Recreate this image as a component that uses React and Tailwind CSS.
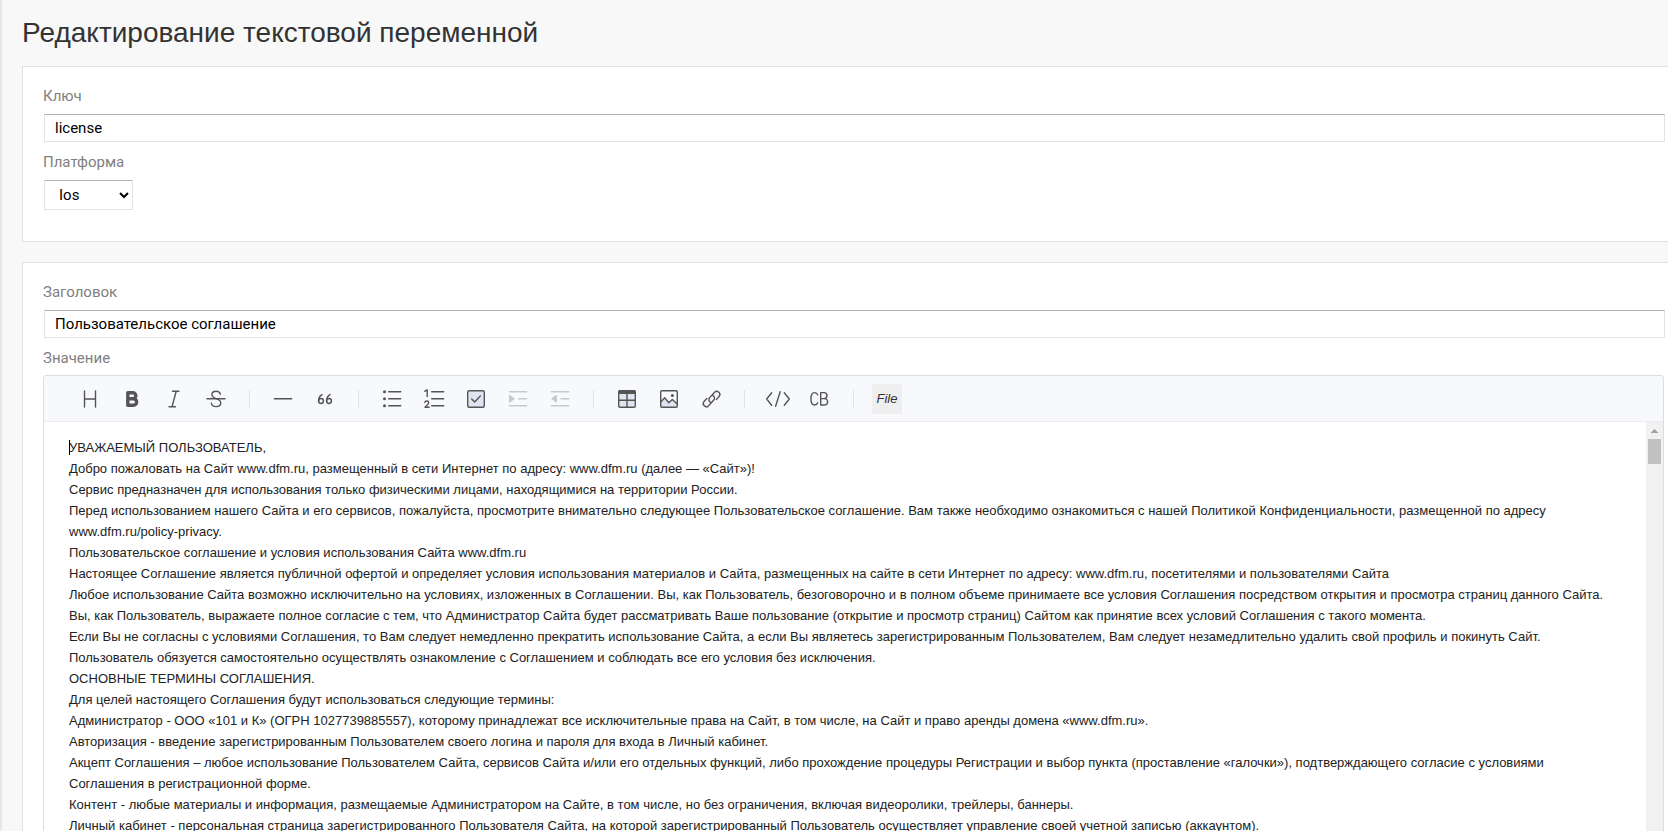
import React, { useState } from 'react';

const AGREEMENT = [
    "УВАЖАЕМЫЙ ПОЛЬЗОВАТЕЛЬ,",
    "Добро пожаловать на Сайт www.dfm.ru, размещенный в сети Интернет по адресу: www.dfm.ru (далее — «Сайт»)!",
    "Сервис предназначен для использования только физическими лицами, находящимися на территории России.",
    "Перед использованием нашего Сайта и его сервисов, пожалуйста, просмотрите внимательно следующее Пользовательское соглашение. Вам также необходимо ознакомиться с нашей Политикой Конфиденциальности, размещенной по адресу www.dfm.ru/policy-privacy.",
    "Пользовательское соглашение и условия использования Сайта www.dfm.ru",
    "Настоящее Соглашение является публичной офертой и определяет условия использования материалов и Сайта, размещенных на сайте в сети Интернет по адресу: www.dfm.ru, посетителями и пользователями Сайта",
    "Любое использование Сайта возможно исключительно на условиях, изложенных в Соглашении. Вы, как Пользователь, безоговорочно и в полном объеме принимаете все условия Соглашения посредством открытия и просмотра страниц данного Сайта.",
    "Вы, как Пользователь, выражаете полное согласие с тем, что Администратор Сайта будет рассматривать Ваше пользование (открытие и просмотр страниц) Сайтом как принятие всех условий Соглашения с такого момента.",
    "Если Вы не согласны с условиями Соглашения, то Вам следует немедленно прекратить использование Сайта, а если Вы являетесь зарегистрированным Пользователем, Вам следует незамедлительно удалить свой профиль и покинуть Сайт.",
    "Пользователь обязуется самостоятельно осуществлять ознакомление с Соглашением и соблюдать все его условия без исключения.",
    "ОСНОВНЫЕ ТЕРМИНЫ СОГЛАШЕНИЯ.",
    "Для целей настоящего Соглашения будут использоваться следующие термины:",
    "Администратор - ООО «101 и К» (ОГРН 1027739885557), которому принадлежат все исключительные права на Сайт, в том числе, на Сайт и право аренды домена «www.dfm.ru».",
    "Авторизация - введение зарегистрированным Пользователем своего логина и пароля для входа в Личный кабинет.",
    "Акцепт Соглашения – любое использование Пользователем Сайта, сервисов Сайта и/или его отдельных функций, либо прохождение процедуры Регистрации и выбор пункта (проставление «галочки»), подтверждающего согласие с условиями Соглашения в регистрационной форме.",
    "Контент - любые материалы и информация, размещаемые Администратором на Сайте, в том числе, но без ограничения, включая видеоролики, трейлеры, баннеры.",
    "Личный кабинет - персональная страница зарегистрированного Пользователя Сайта, на которой зарегистрированный Пользователь осуществляет управление своей учетной записью (аккаунтом).",
];

// Toolbar icons, all drawn on a 32x32 grid
const ICONS = {
    heading: <path d="M10.5 8v16M21.5 8v16M10.5 16h11" />,
    bold: <path strokeWidth="3.4" d="M11.8 9.7h5a3 3 0 0 1 0 6.1h-5zM11.8 15.8h5.6a3.2 3.2 0 0 1 0 6.5h-5.6z" />,
    italic: <path d="M14.5 8.3h6.5M11 23.7h6.5M18.2 8.3l-4.2 15.4" />,
    strike: (
        <>
            <path d="M20.3 11.2c-.4-1.9-2-3-4.2-3-2.4 0-4.2 1.3-4.2 3.4 0 2.2 1.7 3.2 4.3 4.1 2.9.9 4.5 1.9 4.5 4.2s-2 3.7-4.6 3.7c-2.7 0-4.4-1.3-4.8-3.5" />
            <path d="M7 15.7h18" />
        </>
    ),
    hr: <path d="M7.3 15.7h17.4" />,
    quote: (
        <g strokeWidth="1.5">
            <circle cx="12" cy="18" r="2.4" />
            <circle cx="20" cy="18" r="2.4" />
            <path d="M13 11.6c-2.3 1.3-3.4 3.7-3.4 6.4M21 11.6c-2.3 1.3-3.4 3.7-3.4 6.4" />
        </g>
    ),
    ul: (
        <>
            <path d="M12.7 8.7h12M12.7 15.7h12M12.7 22.7h12" />
            <g fill="currentColor" stroke="none">
                <circle cx="8.5" cy="8.7" r="1.5" />
                <circle cx="8.5" cy="15.7" r="1.5" />
                <circle cx="8.5" cy="22.7" r="1.5" />
            </g>
        </>
    ),
    ol: (
        <>
            <path d="M13.7 8.7h12M13.7 15.7h12M13.7 22.7h12" />
            <path d="M6.8 8.2l2.4-1.3v6.6M6.8 19.5c.2-2 3.9-2.1 3.9.2 0 1.4-1.4 2.4-3.7 4.5h4.2" />
        </>
    ),
    task: (
        <>
            <rect x="7.7" y="7.7" width="16.6" height="16.6" rx="1.5" fill="#dfe4f1" />
            <path d="M11.7 16l3 3 5.6-6" />
        </>
    ),
    indent: (
        <>
            <path d="M7.3 8.7h17.4M16.7 15.7h8M7.3 22.7h17.4" />
            <path fill="currentColor" stroke="none" d="M7 12.2l1-.2 5 3.7-5 3.8-1-.2z" />
        </>
    ),
    outdent: (
        <>
            <path d="M7.3 8.7h17.4M17 15.7h7.7M7.3 22.7h17.4" />
            <path fill="currentColor" stroke="none" d="M13 12.2l-1-.2-5 3.7 5 3.8 1-.2z" />
        </>
    ),
    table: (
        <>
            <rect x="7.7" y="7.7" width="16.6" height="16.6" rx="1.2" fill="#dfe4f1" />
            <path fill="currentColor" stroke="none" d="M7.5 7.5h17V11h-17z" />
            <path d="M7.7 17.2h16.6M16 10.5v13.8" />
        </>
    ),
    image: (
        <>
            <path fill="#dfe4f1" stroke="none" d="M8 19l4-4.5 4 5 3.5-3 4.5 4V24H8z" />
            <rect x="7.7" y="7.7" width="16.6" height="16.6" rx="1.2" />
            <path d="M8 18.7l3.7-3.9 4.1 5 3.5-3.2 4.7 4.2" />
            <circle cx="19.4" cy="12.5" r="1.5" fill="currentColor" stroke="none" />
        </>
    ),
    link: (
        <>
            <path d="M17.6 12.4c2 .9 2.6 3.3 1 4.9l-5.1 5.6c-2.8 2.6-7-1.4-4.5-4.3l2.9-3" />
            <path d="M15.8 19.4c-2-.9-2.6-3.2-1-4.8l4.8-5.4c2.8-2.6 7 1.3 4.5 4.3l-2.800 3.100" />
        </>
    ),
    code: <path d="M9.700 9.700L4.700 16l5 6.300M22.300 9.700l5 6.300-5 6.300M18.200 8.700l-4.600 14.600" />,
    codeblock: (
        <path d="M13.700 11.800c-.6-1.400-1.700-2.200-3.100-2.200-2.400 0-3.700 2.200-3.700 6.200s1.300 6.200 3.700 6.200c1.400 0 2.500-.8 3.100-2.200M16.700 9.600v12.400h3.300c2.300 0 3.600-1.300 3.600-3.300s-1.300-3.100-3.600-3.100h-3.300M20 15.600c1.900 0 3-1.100 3-3s-1.100-3-3-3h-3.300" />
    ),
};

const TOOLBAR = [
    ['heading', 'bold', 'italic', 'strike'],
    ['hr', 'quote'],
    ['ul', 'ol', 'task', 'indent', 'outdent'],
    ['table', 'image', 'link'],
    ['code', 'codeblock'],
];

const DISABLED = ['indent', 'outdent'];

function ToolbarButton({ name }) {
    const disabled = DISABLED.includes(name);
    return (
        <button
            type="button"
            aria-label={name}
            disabled={disabled}
            className={`mx-[5px] h-8 w-8 shrink-0 ${disabled ? 'text-[#c8c9cd]' : 'text-[#555555]'}`}
        >
            <svg
                viewBox="0 0 32 32"
                className="h-8 w-8"
                fill="none"
                stroke="currentColor"
                strokeWidth="1.4"
                strokeLinecap="round"
                strokeLinejoin="round"
            >
                {ICONS[name]}
            </svg>
        </button>
    );
}

function Label({ htmlFor, id, children }) {
    return (
        <label htmlFor={htmlFor} id={id} className="block text-[15px] leading-[22px] text-[#808080]">
            {children}
        </label>
    );
}

function TextField({ id, label, value, onChange }) {
    return (
        <div className="mb-[9px]">
            <Label htmlFor={id}>{label}</Label>
            <div className="mt-[7px] flex pl-px">
                <input
                    id={id}
                    type="text"
                    value={value}
                    onChange={(e) => onChange(e.target.value)}
                    className="h-7 w-full border border-[#e3e3e3] border-t-[#b3b3b3] bg-white px-[10px] text-[15px] text-black outline-none"
                />
            </div>
        </div>
    );
}

export default function App() {
    const [key, setKey] = useState('license');
    const [platform, setPlatform] = useState('ios');
    const [title, setTitle] = useState('Пользовательское соглашение');

    return (
        <div className="flex h-screen overflow-hidden border-l-2 border-[#e7e7e7] bg-[#f8f8f8] font-['Roboto',sans-serif]">
            <main className="flex min-w-0 flex-1 flex-col pl-5">
                <h1 className="py-[15px] font-['Liberation_Sans',Arial,sans-serif] text-[28px] leading-9 text-[#333333]">
                    Редактирование текстовой переменной
                </h1>

                {/* Key and platform */}
                <section className="mb-5 shrink-0 border border-r-0 border-[#e0e0e0] bg-white pt-[18px] pr-[3px] pb-[31px] pl-5">
                    <TextField id="key" label="Ключ" value={key} onChange={setKey} />
                    <Label htmlFor="platform">Платформа</Label>
                    <div className="mt-[7px] flex pl-px">
                        <select
                            id="platform"
                            value={platform}
                            onChange={(e) => setPlatform(e.target.value)}
                            className="h-[30px] w-[89px] border border-[#e3e3e3] border-t-[#b3b3b3] bg-white pl-[10px] text-[15px] text-black outline-none"
                        >
                            <option value="ios">Ios</option>
                            <option value="android">Android</option>
                        </select>
                    </div>
                </section>

                {/* Title and value */}
                <section className="flex min-h-0 flex-1 flex-col border border-r-0 border-b-0 border-[#e0e0e0] bg-white pt-[18px] pr-[3px] pl-5">
                    <TextField id="title" label="Заголовок" value={title} onChange={setTitle} />
                    <Label id="value-label">Значение</Label>

                    <div className="mt-[6px] mr-px flex min-h-0 flex-1 flex-col overflow-hidden rounded-t-[4px] border border-b-0 border-[#dadde6]">
                        <div className="flex h-[46px] shrink-0 items-center border-b border-[#ebedf2] bg-[#f7f9fc] px-[25px]">
                            {TOOLBAR.map((group, idx) => (
                                <React.Fragment key={idx}>
                                    {group.map((name) => (
                                        <ToolbarButton key={name} name={name} />
                                    ))}
                                    <div className="mx-3 h-[18px] w-px bg-[#e1e3e9]" />
                                </React.Fragment>
                            ))}
                            <button
                                type="button"
                                className="mx-[5px] h-8 w-8 border border-[#f7f9fc] bg-[#efefef] font-['Liberation_Sans',Arial,sans-serif] text-[13px] text-[#333333] italic"
                            >
                                File
                            </button>
                        </div>

                        <div className="flex min-h-0 flex-1">
                            <div
                                role="textbox"
                                aria-multiline="true"
                                aria-labelledby="value-label"
                                contentEditable
                                suppressContentEditableWarning
                                className="relative min-w-0 flex-1 overflow-hidden px-[25px] pt-[15px] font-['Liberation_Sans',Arial,sans-serif] text-[13px] leading-[21px] text-[#222222] outline-none"
                            >
                                <span className="absolute top-[18px] left-[25px] h-[15px] w-px bg-black" />
                                {AGREEMENT.map((text, idx) => (
                                    <p key={idx}>{text}</p>
                                ))}
                            </div>

                            {/* Scrollbar */}
                            <div className="flex w-[17px] shrink-0 flex-col items-center bg-[#f1f1f1]">
                                <svg viewBox="0 0 17 17" className="h-[17px] w-[17px]" shapeRendering="crispEdges">
                                    <path d="M8 7h1v1h1v1h1v1h1v1H5v-1h1V9h1V8h1z" fill="#a3a3a3" />
                                </svg>
                                <div className="h-[25px] w-[13px] bg-[#c1c1c1]" />
                            </div>
                        </div>
                    </div>
                </section>
            </main>
        </div>
    );
}
